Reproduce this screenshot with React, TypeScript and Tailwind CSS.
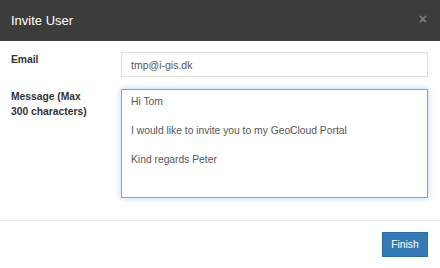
export default function App() {
  const message = "Hi Tom\n\nI would like to invite you to my GeoCloud Portal\n\nKind regards Peter";

  return (
    <div className="w-[440px] h-[268px] bg-white font-['Liberation_Sans',Arial,sans-serif] text-[#333]">
      <div className="h-[41px] bg-[#3d3c3c] pl-[11px] pr-[13px] flex items-center justify-between">
        <h4 className="text-[13px] text-white leading-none">Invite User</h4>
        <span className="text-[14px] font-bold text-[#7d7d7d] leading-none -mt-[3px]">×</span>
      </div>

      <div className="px-[11px] pt-[11px] pb-[22px] border-b border-[#e5e5e5]">
        <div className="flex mb-[12px]">
          <label className="w-[110px] shrink-0 pr-[30px] text-[10.3px] font-bold leading-[15px]">Email</label>
          <input
            readOnly
            value="tmp@i-gis.dk"
            className="w-[307px] h-[25px] px-[9px] border border-[#e0e0e0] text-[10.5px] text-[#555] outline-none"
          />
        </div>
        <div className="flex">
          <label className="w-[110px] shrink-0 pr-[30px] text-[10.3px] font-bold leading-[15px]">
            Message (Max 300 characters)
          </label>
          <textarea
            readOnly
            value={message}
            className="w-[307px] h-[109px] px-[9px] py-[5px] border border-[#66afe9] text-[10.3px] leading-[14.5px] text-[#555] outline-none resize-none shadow-[0_0_6px_rgba(102,175,233,0.5)]"
          />
        </div>
      </div>

      <div className="flex justify-end pt-[11px] pr-[12px]">
        <button className="w-[46px] h-[25px] bg-[#337ab7] border border-[#2e6da4] text-white text-[10.3px]">
          Finish
        </button>
      </div>
    </div>
  );
}
